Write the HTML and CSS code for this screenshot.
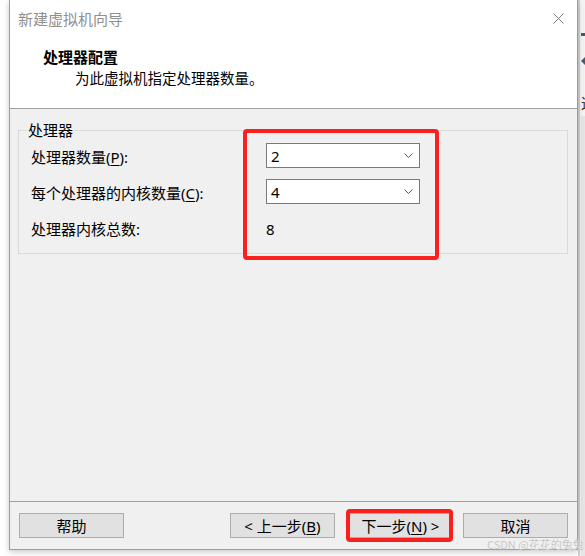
FILE: index.html
```html
<!DOCTYPE html>
<html lang="zh">
<head>
<meta charset="utf-8">
<title>新建虚拟机向导</title>
<link rel="stylesheet" href="styles.css">
</head>
<body>
<div class="desk">
  <div class="dialog">
    <div class="header">
      <div class="titlebar">
        <span class="title">新建虚拟机向导</span>
        <svg class="close" width="11" height="11" viewBox="0 0 11 11"><path d="M0.5 0.5 L10.5 10.5 M10.5 0.5 L0.5 10.5" stroke="#7a7a7a" stroke-width="1" fill="none"/></svg>
      </div>
      <div class="heading">处理器配置</div>
      <div class="subtitle">为此虚拟机指定处理器数量。</div>
    </div>
    <div class="content">
      <fieldset class="group">
        <legend class="legend">处理器</legend>
        <div class="row">
          <span class="label">处理器数量(<u>P</u>):</span>
          <div class="combo"><span class="combo-value">2</span><svg class="chev" width="9" height="5" viewBox="0 0 9 5"><polyline points="0.5,0.5 4.5,4.5 8.5,0.5" stroke="#555" stroke-width="1" fill="none"/></svg></div>
        </div>
        <div class="row row-2">
          <span class="label">每个处理器的内核数量(<u>C</u>):</span>
          <div class="combo"><span class="combo-value">4</span><svg class="chev" width="9" height="5" viewBox="0 0 9 5"><polyline points="0.5,0.5 4.5,4.5 8.5,0.5" stroke="#555" stroke-width="1" fill="none"/></svg></div>
        </div>
        <div class="row row-3">
          <span class="label">处理器内核总数:</span>
          <span class="total">8</span>
        </div>
      </fieldset>
    </div>
    <div class="footer">
      <button class="btn">帮助</button>
      <div class="spacer"></div>
      <button class="btn btn-back">&lt; 上一步(<u>B</u>)</button>
      <button class="btn btn-next">下一步(<u>N</u>) &gt;</button>
      <button class="btn">取消</button>
    </div>
  </div>
  <div class="side">
    <div class="side-bar"></div>
    <div class="side-arrow"></div>
    <div class="side-char">这</div>
    <div class="side-rest"></div>
  </div>
</div>
<div class="mark mark-fields"></div>
<div class="mark mark-next"></div>
<div class="watermark">CSDN @花花的兔兔</div>
</body>
</html>
```

FILE: styles.css
```css
* { box-sizing: border-box; }

html, body {
  margin: 0;
  padding: 0;
}

body {
  width: 585px;
  height: 556px;
  overflow: hidden;
  background: #ffffff;
  position: relative;
  font-family: "Noto Sans", "Noto Sans CJK SC", sans-serif;
  font-size: 15px;
  color: #000;
}

.desk {
  display: flex;
  height: 556px;
}

.dialog {
  margin-left: 9px;
  width: 569px;
  height: 550px;
  display: flex;
  flex-direction: column;
  border-left: 1px solid #9c9c9c;
  border-right: 1px solid #9c9c9c;
  border-bottom: 1px solid #9c9c9c;
  background: #f0f0f0;
  box-shadow: 0 2px 6px rgba(0, 0, 0, 0.22);
  position: relative;
}

/* header */
.header {
  height: 109px;
  background: #ffffff;
  border-bottom: 1px solid #a0a0a0;
  flex: none;
}

.titlebar {
  height: 38px;
  display: flex;
  align-items: center;
  justify-content: space-between;
  padding-left: 8px;
  padding-right: 13px;
}

.title {
  font-size: 15px;
  line-height: 20px;
  color: #8f8f8f;
  font-family: "Noto Sans CJK SC", sans-serif;
}

.close {
  display: block;
  margin-top: -2px;
}

.heading {
  margin-top: 9px;
  padding-left: 33px;
  font-size: 15px;
  line-height: 20px;
  font-weight: bold;
  font-family: "Noto Sans CJK SC", sans-serif;
}

.subtitle {
  margin-top: 1px;
  padding-left: 65px;
  font-size: 14.5px;
  line-height: 20px;
  font-family: "Noto Sans CJK SC", sans-serif;
}

/* content */
.content {
  flex: 1;
  padding: 11px 9px 0 8px;
}

.group {
  margin: 0;
  width: 550px;
  border: 1px solid #dadada;
  padding: 3px 8px 15px 8px;
  min-width: 0;
}

.legend {
  padding: 0 1px;
  line-height: 20px;
  font-size: 15px;
  font-family: "Noto Sans CJK SC", sans-serif;
}

.row {
  display: flex;
  align-items: center;
  height: 25px;
  padding-left: 4px;
}

.row-2 {
  margin-top: 11px;
}

.row-3 {
  margin-top: 14px;
  height: 20px;
}

.label {
  width: 235px;
  flex: none;
  line-height: 20px;
  padding-top: 2px;
}

.label u, .btn u {
  text-underline-offset: 2px;
}

.combo {
  width: 154px;
  height: 25px;
  border: 1px solid #7a7a7a;
  background: #ffffff;
  display: flex;
  align-items: center;
  justify-content: space-between;
  padding-left: 4px;
  padding-right: 6px;
}

.combo-value {
  line-height: 20px;
  font-size: 15px;
}

.chev {
  display: block;
}

.total {
  line-height: 20px;
  padding-top: 2px;
}

/* footer */
.footer {
  flex: none;
  border-top: 1px solid #a0a0a0;
  height: 48px;
  display: flex;
  align-items: flex-start;
  padding: 11px 9px 0 9px;
}

.spacer {
  flex: 1;
}

.btn {
  width: 105px;
  height: 25px;
  margin: 0;
  padding: 0;
  border: 1px solid #adadad;
  background: #e1e1e1;
  font-family: "Noto Sans", "Noto Sans CJK SC", sans-serif;
  font-size: 15px;
  line-height: 20px;
  color: #000;
}

.btn-back {
  margin-right: 13px;
}

.btn-next {
  margin-right: 10px;
}

/* right edge: window behind */
.side {
  flex: 1;
  display: flex;
  flex-direction: column;
  background: linear-gradient(to right, #d2d2d2 0, #d2d2d2 2px, #f4f4f4 2px);
  padding-left: 3px;
  overflow: hidden;
}

.side-bar {
  margin-top: 33px;
  height: 3px;
  width: 5px;
  background: #47596b;
}

.side-arrow {
  margin-top: 20px;
  width: 0;
  height: 0;
  border-top: 5px solid transparent;
  border-bottom: 5px solid transparent;
  border-right: 5px solid #4a5d70;
}

.side-char {
  margin-top: 28px;
  font-family: "Noto Sans CJK SC", sans-serif;
  font-size: 15px;
  line-height: 18px;
  color: #333;
  white-space: nowrap;
}

.side-rest {
  flex: 1;
  margin-top: 4px;
  background: #e6e6e6;
}

/* red annotation boxes */
.mark {
  position: absolute;
  border: 4px solid #fb2020;
  border-radius: 4px;
}

.mark-fields {
  left: 243px;
  top: 129px;
  width: 196px;
  height: 131px;
}

.mark-next {
  left: 346px;
  top: 509px;
  width: 107px;
  height: 33px;
}

.watermark {
  position: absolute;
  left: 487px;
  top: 537px;
  font-family: "Noto Sans CJK SC", sans-serif;
  font-size: 11px;
  line-height: 15px;
  color: #c4c4c4;
  text-shadow: 0 0 1px #fff;
  white-space: nowrap;
}
```
